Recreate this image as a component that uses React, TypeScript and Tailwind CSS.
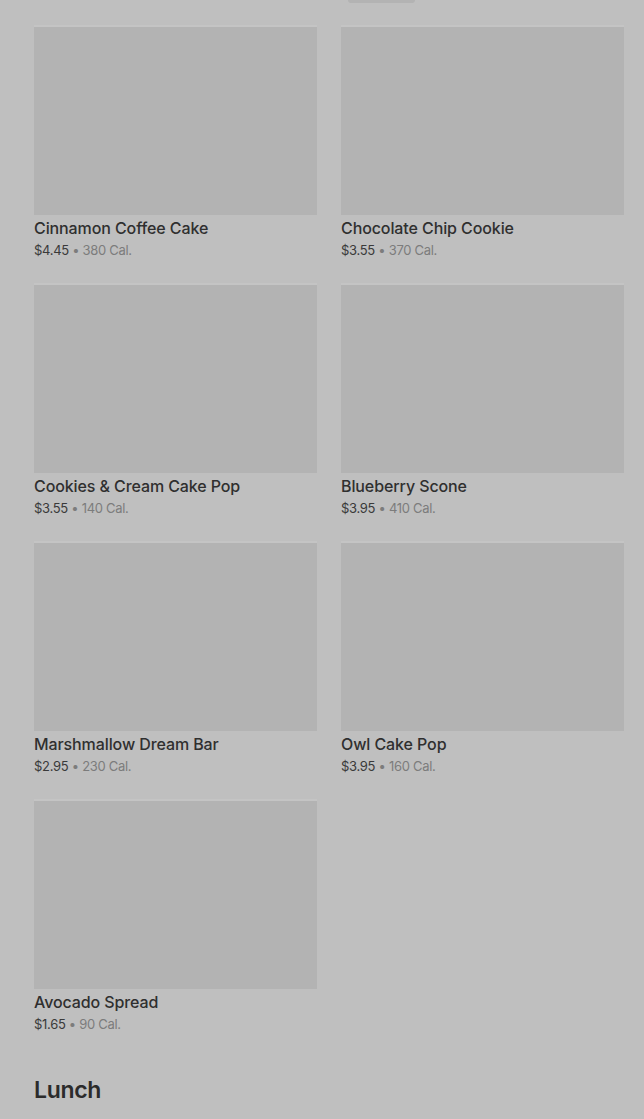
import React from 'react';

interface MenuItem {
    name: string;
    price: string;
    cal: string;
}

const items: MenuItem[] = [
    { name: 'Cinnamon Coffee Cake', price: '$4.45', cal: '380 Cal.' },
    { name: 'Chocolate Chip Cookie', price: '$3.55', cal: '370 Cal.' },
    { name: 'Cookies & Cream Cake Pop', price: '$3.55', cal: '140 Cal.' },
    { name: 'Blueberry Scone', price: '$3.95', cal: '410 Cal.' },
    { name: 'Marshmallow Dream Bar', price: '$2.95', cal: '230 Cal.' },
    { name: 'Owl Cake Pop', price: '$3.95', cal: '160 Cal.' },
    { name: 'Avocado Spread', price: '$1.65', cal: '90 Cal.' },
];

const ItemCard: React.FC<{ item: MenuItem }> = ({ item }) => (
    <div className="flex flex-col">
        <div className="h-[190px] w-full bg-[#b3b3b3] border-t-2 border-[#c4c4c4]" />
        <div className="mt-[3px] text-[16px] leading-[20px] font-medium tracking-[-0.1px] text-[#2f2f2f]">{item.name}</div>
        <div className="mt-[3px] text-[13px] leading-[18px] tracking-[-0.3px] text-[#3a3a3a]">
            {item.price}
            <span className="text-[#7c7c7c]"> • {item.cal}</span>
        </div>
    </div>
);

export default function App() {
    return (
        <div className="min-h-[1119px] w-full bg-[#bfbfbf] overflow-hidden" style={{ fontFamily: 'Inter, "Noto Sans", sans-serif' }}>
            <div className="flex justify-center pl-[118px]">
                <div className="h-[3px] w-[67px] rounded-b bg-[#b3b3b3]" />
            </div>
            <div className="pl-[34px] pr-[20px] pt-[22px]">
                <div className="grid grid-cols-2 gap-x-[24px] gap-y-[24px]">
                    {items.map((it) => (
                        <ItemCard key={it.name} item={it} />
                    ))}
                </div>
                <h2 className="mt-[41px] text-[23px] leading-[32px] font-semibold tracking-[-0.3px] text-[#2b2b2b]">Lunch</h2>
            </div>
        </div>
    );
}
